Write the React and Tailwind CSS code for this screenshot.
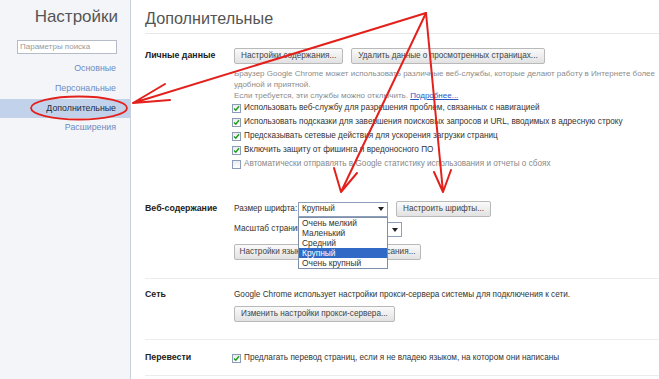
import React from 'react'

const FONT = { fontFamily: '"Liberation Sans", Arial, sans-serif' }

function Btn({ children, className = '' }) {
    return (
        <div className={`h-[16px] px-[6px] flex items-center rounded-[2px] border border-[#b9b9b9] bg-gradient-to-b from-[#fafafa] to-[#e2e2e2] text-[8.2px] text-[#444] whitespace-nowrap shrink-0 ${className}`}>
            {children}
        </div>
    )
}

function Check({ checked = true, children, muted = false }) {
    return (
        <div className="h-[14px] shrink-0 flex items-center gap-[3px]">
            <div className="w-[9px] h-[9px] border border-[#8a9cb8] bg-gradient-to-b from-[#ececec] to-[#ffffff] flex items-center justify-center shrink-0">
                {checked && (
                    <svg width="7" height="7" viewBox="0 0 7 7">
                        <path d="M1 3.5 L2.8 5.3 L6 1.2" fill="none" stroke="#1f9a1f" strokeWidth="1.4" />
                    </svg>
                )}
            </div>
            <span className={`text-[8.2px] whitespace-nowrap ${muted ? 'text-[#888]' : 'text-[#333]'}`}>{children}</span>
        </div>
    )
}

function Select({ value, className = '' }) {
    return (
        <div className={`h-[15px] shrink-0 border border-[#8e9fb9] bg-white flex items-center justify-between pl-[3px] pr-[3px] text-[8.2px] text-[#333] ${className}`}>
            <span>{value}</span>
            <svg width="6" height="4" viewBox="0 0 6 4"><path d="M0 0 H6 L3 4 Z" fill="#222" /></svg>
        </div>
    )
}

function Section({ label, children, className = '' }) {
    return (
        <div className={`flex shrink-0 border-b border-[#ececec] ${className}`}>
            <div className="w-[89px] shrink-0 text-[8.8px] font-bold text-[#222] h-[16px] flex items-center">{label}</div>
            <div className="flex-1 min-w-0">{children}</div>
        </div>
    )
}

export default function App() {
    return (
        <div className="relative w-[659px] h-[379px] overflow-hidden bg-white flex" style={FONT}>
            {/* sidebar */}
            <div className="w-[131px] shrink-0 bg-[#f3f5f9] border-r border-[#c9d1dd] flex flex-col">
                <div className="h-[32px] shrink-0 pt-[7px] pr-[12px] text-right text-[17px] text-[#555] leading-[20px]">Настройки</div>
                <div className="pl-[17px] pr-[13px] mt-[8px] shrink-0">
                    <div className="h-[14px] border border-[#b5bcc7] bg-white text-[8px] text-[#999] pl-[2px] flex items-center">Параметры поиска</div>
                </div>
                <div className="mt-[5px] flex flex-col text-[8.8px] shrink-0">
                    <div className="h-[20px] flex items-center justify-end pr-[14px] text-[#6f8bc0]">Основные</div>
                    <div className="h-[20px] flex items-center justify-end pr-[14px] text-[#6f8bc0]">Персональные</div>
                    <div className="h-[19px] flex items-center justify-end pr-[14px] bg-[#c2d2ea] text-[#1e2a3a]">Дополнительные</div>
                    <div className="h-[20px] flex items-center justify-end pr-[14px] text-[#6f8bc0]">Расширения</div>
                </div>
            </div>

            {/* main */}
            <div className="flex-1 pl-[14px] flex flex-col">
                <div className="h-[34px] shrink-0 pt-[8px] border-b border-[#e8e8e8] text-[16.2px] leading-[20px] text-[#555]">Дополнительные</div>

                <Section label="Личные данные" className="pt-[14px] pb-[7px] border-b-0">
                    <div className="flex gap-[8px]">
                        <Btn>Настройки содержания...</Btn>
                        <Btn>Удалить данные о просмотренных страницах...</Btn>
                    </div>
                    <div className="mt-[4px] text-[8px] leading-[11px] text-[#8c8c8c]">
                        <div className="whitespace-nowrap">Браузер Google Chrome может использовать различные веб-службы, которые делают работу в Интернете более</div>
                        <div>удобной и приятной.</div>
                        <div>Если требуется, эти службы можно отключить. <span className="text-[#2a55c0] underline">Подробнее...</span></div>
                    </div>
                    <div className="flex flex-col -ml-[2px]">
                        <Check>Использовать веб-службу для разрешения проблем, связанных с навигацией</Check>
                        <Check>Использовать подсказки для завершения поисковых запросов и URL, вводимых в адресную строку</Check>
                        <Check>Предсказывать сетевые действия для ускорения загрузки страниц</Check>
                        <Check>Включить защиту от фишинга и вредоносного ПО</Check>
                        <Check checked={false} muted>Автоматически отправлять в Google статистику использования и отчеты о сбоях</Check>
                    </div>
                </Section>

                <Section label="Веб-содержание" className="pt-[23px] pb-[18px]">
                    <div className="flex items-center text-[8.2px] text-[#333]">
                        <span className="w-[64px] shrink-0 whitespace-nowrap">Размер шрифта:</span>
                        <div className="relative">
                            <Select value="Крупный" className="w-[90px]" />
                            <div className="absolute left-0 top-[15px] w-[90px] z-10 border border-[#7d8ea8] bg-white text-[8.4px] leading-[10px] text-[#333]">
                                <div className="pl-[3px]">Очень мелкий</div>
                                <div className="pl-[3px]">Маленький</div>
                                <div className="pl-[3px]">Средний</div>
                                <div className="pl-[3px] bg-[#3169c6] text-white">Крупный</div>
                                <div className="pl-[3px]">Очень крупный</div>
                            </div>
                        </div>
                        <Btn className="ml-[8px]">Настроить шрифты...</Btn>
                    </div>
                    <div className="mt-[5px] flex items-center text-[8.2px] text-[#333]">
                        <span className="w-[76px] shrink-0 whitespace-nowrap">Масштаб страницы:</span>
                        <Select value="100%" className="w-[92px]" />
                    </div>
                    <div className="mt-[7px] flex">
                        <Btn className="w-[187px] justify-center">Настройки языков и проверки правописания...</Btn>
                    </div>
                </Section>

                <Section label="Сеть" className="pt-[8px] pb-[17px]">
                    <div className="h-[16px] flex items-center text-[8.2px] text-[#333] whitespace-nowrap">Google Chrome использует настройки прокси-сервера системы для подключения к сети.</div>
                    <div className="mt-[3px] flex">
                        <Btn>Изменить настройки прокси-сервера...</Btn>
                    </div>
                </Section>

                <Section label="Перевести" className="pt-[10px] pb-[9px]">
                    <div className="-ml-[2px] h-[16px] flex items-center">
                        <Check>Предлагать перевод страниц, если я не владею языком, на котором они написаны</Check>
                    </div>
                </Section>
            </div>

            {/* red annotation marks */}
            <svg className="absolute inset-0 pointer-events-none z-20" width="659" height="379" viewBox="0 0 659 379">
                <g fill="none" stroke="#e3211c" strokeWidth="2" strokeLinecap="round">
                    <path d="M426 13 L133 103 M133 103 L165 84 M133 103 L170 100" />
                    <path d="M426 13 L341 192 M341 192 L334 168 M341 192 L357 173" />
                    <path d="M426 13 L443 192 M443 192 L434 172 M443 192 L451 170" />
                    <ellipse cx="79" cy="108" rx="48" ry="11.5" strokeWidth="1.8" />
                </g>
            </svg>
        </div>
    )
}
